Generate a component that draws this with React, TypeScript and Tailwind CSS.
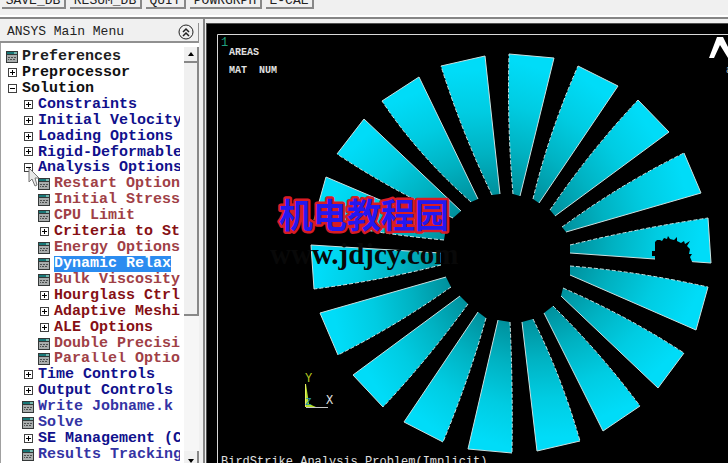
import React from 'react';

type Kind = 'plus' | 'minus' | 'leaf';
type Item = { label: string; level: 0 | 1 | 2; kind: Kind; selected?: boolean };

const items: Item[] = [
  { label: 'Preferences', level: 0, kind: 'leaf' },
  { label: 'Preprocessor', level: 0, kind: 'plus' },
  { label: 'Solution', level: 0, kind: 'minus' },
  { label: 'Constraints', level: 1, kind: 'plus' },
  { label: 'Initial Velocity', level: 1, kind: 'plus' },
  { label: 'Loading Options', level: 1, kind: 'plus' },
  { label: 'Rigid-Deformable', level: 1, kind: 'plus' },
  { label: 'Analysis Options', level: 1, kind: 'minus' },
  { label: 'Restart Option', level: 2, kind: 'leaf' },
  { label: 'Initial Stress', level: 2, kind: 'leaf' },
  { label: 'CPU Limit', level: 2, kind: 'leaf' },
  { label: 'Criteria to St', level: 2, kind: 'plus' },
  { label: 'Energy Options', level: 2, kind: 'leaf' },
  { label: 'Dynamic Relax', level: 2, kind: 'leaf', selected: true },
  { label: 'Bulk Viscosity', level: 2, kind: 'leaf' },
  { label: 'Hourglass Ctrl', level: 2, kind: 'plus' },
  { label: 'Adaptive Meshi', level: 2, kind: 'plus' },
  { label: 'ALE Options', level: 2, kind: 'plus' },
  { label: 'Double Precisi', level: 2, kind: 'leaf' },
  { label: 'Parallel Optio', level: 2, kind: 'leaf' },
  { label: 'Time Controls', level: 1, kind: 'plus' },
  { label: 'Output Controls', level: 1, kind: 'plus' },
  { label: 'Write Jobname.k', level: 1, kind: 'leaf' },
  { label: 'Solve', level: 1, kind: 'leaf' },
  { label: 'SE Management (C', level: 1, kind: 'plus' },
  { label: 'Results Tracking', level: 1, kind: 'leaf' },
];

const indent = ['pl-[3px]', 'pl-[19px]', 'pl-[35px]'];
const branchColor = ['text-[#101010]', 'text-[#10108c]', 'text-[#861014]'];
const leafColor = ['text-[#202020]', 'text-[#3434a4]', 'text-[#a04046]'];

type Pt = [number, number];
// outer start, outer end, inner end, inner start, midpoint of the start edge
const blades: [Pt, Pt, Pt, Pt, Pt][] = [
  [[509, 54], [554, 58], [520, 196], [513, 194], [509, 125]],
  [[578, 66], [618, 86], [539, 203], [533, 199], [552, 133]],
  [[638, 100], [669, 132], [555, 216], [550, 210], [592, 153]],
  [[684, 153], [701, 193], [566, 232], [562, 227], [622, 187]],
  [[708, 218], [711, 263], [570, 253], [570, 245], [638, 230]],
  [[708, 287], [696, 330], [570, 275], [570, 266], [639, 274]],
  [[684, 353], [658, 388], [561, 296], [563, 288], [625, 318]],
  [[640, 406], [603, 431], [544, 313], [553, 306], [599, 355]],
  [[580, 441], [537, 451], [522, 322], [533, 319], [559, 378]],
  [[512, 453], [468, 449], [498, 320], [510, 322], [512, 386]],
  [[443, 442], [404, 422], [478, 312], [486, 318], [467, 379]],
  [[383, 407], [353, 375], [460, 296], [468, 304], [427, 357]],
  [[338, 355], [320, 313], [446, 277], [451, 287], [396, 323]],
  [[314, 289], [311, 245], [441, 253], [441, 265], [378, 279]],
  [[314, 220], [326, 177], [446, 228], [444, 240], [378, 232]],
  [[337, 154], [364, 119], [461, 211], [453, 218], [393, 188]],
  [[382, 101], [419, 77], [478, 199], [471, 202], [422, 153]],
  [[441, 66], [485, 56], [500, 194], [492, 195], [464, 131]],
];

function Glyph({ kind }: { kind: Kind }) {
  if (kind === 'leaf') {
    return (
      <svg className="h-3 w-4 shrink-0" viewBox="0 0 16 12" shapeRendering="crispEdges" aria-hidden="true">
        <rect x="2" y="0" width="12" height="12" fill="#343838" />
        <rect x="3" y="1" width="7" height="2" fill="#187878" />
        <rect x="10" y="1" width="3" height="2" fill="#78b8b0" />
        <rect x="3" y="4" width="10" height="7" fill="#a8acac" />
        <path d="M4 6.5h2M7 6.5h2M10 6.5h2M4 8.5h1M6 8.5h2M9 8.5h2" stroke="#4c5050" />
      </svg>
    );
  }
  return (
    <svg className="h-3 w-4 shrink-0" viewBox="0 0 16 12" shapeRendering="crispEdges" aria-hidden="true">
      <rect x="4.5" y="1.5" width="8" height="8" fill="#fff" stroke="#404040" />
      <path d="M6 5.5h5" stroke="#000" />
      {kind === 'plus' && <path d="M8.5 3v5" stroke="#000" />}
    </svg>
  );
}

function TreeRow({ item }: { item: Item }) {
  const color = item.kind === 'leaf' ? leafColor[item.level] : branchColor[item.level];
  return (
    <li className="min-h-0 flex-1">
      <button
        type="button"
        className={`flex h-full w-full items-center gap-0.5 overflow-hidden text-left text-[15px] leading-4 font-bold whitespace-pre ${indent[item.level]} ${color}`}
      >
        <Glyph kind={item.kind} />
        <span className={item.selected ? 'bg-[#2b8cf0] text-white' : ''}>{item.label}</span>
      </button>
    </li>
  );
}

function ToolButton({ label, width }: { label: string; width: string }) {
  return (
    <button
      type="button"
      className={`h-5 shrink-0 border-r-2 border-b-2 border-[#888] bg-[#f0f0f0] pt-1 text-center text-[13px] leading-4 text-[#222] ${width}`}
    >
      {label}
    </button>
  );
}

function Blade({ points, id }: { points: [Pt, Pt, Pt, Pt, Pt]; id: string }) {
  const [o1, o2, i2, i1, m] = points;
  const cx = 2 * m[0] - (o1[0] + i1[0]) / 2;
  const cy = 2 * m[1] - (o1[1] + i1[1]) / 2;
  const edge = `M${i1} Q${cx},${cy} ${o1}`;
  return (
    <g>
      <linearGradient id={id} gradientUnits="userSpaceOnUse" x1={i1[0]} y1={i1[1]} x2={o2[0]} y2={o2[1]}>
        <stop offset="0" stopColor="#00909c" />
        <stop offset="0.3" stopColor="#00b2c2" />
        <stop offset="0.6" stopColor="#00cce2" />
        <stop offset="0.9" stopColor="#00dcf8" />
      </linearGradient>
      <path d={`${edge} L${o2} L${i2} Z`} fill={`url(#${id})`} />
      <path d={edge} fill="none" stroke="#c8e4e4" strokeDasharray="4 2" />
      <path d={`M${o1} L${o2} L${i2}`} fill="none" stroke="#c8e0e0" />
    </g>
  );
}

function Plot() {
  return (
    <svg
      className="block h-[439px] w-[521px] shrink-0 font-['Liberation_Mono',monospace]"
      viewBox="207 24 521 439"
      role="img"
      aria-label="Areas plot"
    >
      <path d="M217.5 463V34.5H728" fill="none" stroke="#d8d8d8" />
      <text x="221" y="46" fontSize="12" fill="#20a080">1</text>
      <g fontSize="10" fontWeight="bold" fill="#e0e0e0">
        <text x="229" y="55">AREAS</text>
        <text x="229" y="73">MAT</text>
        <text x="259" y="73">NUM</text>
      </g>
      {blades.map((b, i) => (
        <Blade key={i} points={b} id={`blade-${i}`} />
      ))}
      <path
        d="M655 264V256H652V251H655V242L657 240H660L662 241L664 238L667 239L668 236L670 239L674 240L677 237V241L681 243L684 241L685 244L690 241L687 246L690 249L689 254L692 254L690 257L693 264Z"
        fill="#000"
      />
      <path d="M709 58L717 37H723L728 47V58L720 45L714 58Z" fill="#fff" />
      <text x="726" y="73" fontSize="10" fill="#ccc">a</text>
      <path d="M306 384L309 404L316 407H306Z" fill="#b4e028" />
      <path d="M305.5 384V407" stroke="#e8f060" />
      <path d="M306 407.5H328" stroke="#c8c8c8" />
      <text x="305" y="382" fontSize="12" fill="#b4c820">Y</text>
      <text x="305" y="405" fontSize="11" fill="#2090b0">Z</text>
      <text x="326" y="404" fontSize="12" fill="#e0e0e0">X</text>
      <text x="221" y="465" fontSize="12" fill="#e0e0e0">BirdStrike Analysis Problem(Implicit)</text>
      <text x="270" y="264" fontSize="29" fontWeight="bold" fill="#080808" className="font-['Liberation_Serif',serif]">
        www.jdjcy.com
      </text>
      <text
        x="279"
        y="228"
        fontSize="34"
        fontWeight="bold"
        fill="#2418f0"
        stroke="#d81c24"
        strokeWidth="5"
        strokeLinejoin="round"
        paintOrder="stroke"
        className="font-['Noto_Sans_CJK_SC',sans-serif]"
      >
        机电教程园
      </text>
    </svg>
  );
}

export default function App() {
  return (
    <div className="flex h-screen flex-col overflow-hidden bg-[#f0f0f0] font-['Liberation_Mono',monospace]">
      <header className="flex h-[19px] shrink-0 items-end overflow-hidden border-b-2 border-[#858585]">
        <div className="flex h-full w-full items-end gap-1 border-b-2 border-white pb-1.5 pl-0.5">
          <ToolButton label="SAVE_DB" width="w-16" />
          <ToolButton label="RESUM_DB" width="w-18" />
          <ToolButton label="QUIT" width="w-10" />
          <ToolButton label="POWRGRPH" width="w-18" />
          <ToolButton label="E-CAE" width="w-12" />
        </div>
      </header>
      <main className="flex min-h-0 flex-1">
        <aside className="relative flex w-[203px] shrink-0 flex-col pt-1 pr-1">
          <div className="flex h-5 shrink-0 items-center justify-between border-r border-b-2 border-[#909090] bg-[#f0f0f0] pr-1 pl-[7px]">
            <h1 className="text-[13px] leading-4 text-[#222]">ANSYS Main Menu</h1>
            <button type="button" aria-label="Collapse menu">
              <svg className="h-4 w-4" viewBox="0 0 16 16" fill="none" stroke="#222">
                <circle cx="8" cy="8" r="7" />
                <path d="M5 8l3-3 3 3M5 12l3-3 3 3" strokeWidth="1.5" />
              </svg>
            </button>
          </div>
          <div className="flex min-h-0 flex-1 border-l border-[#a0a0a0] bg-white pt-1">
            <ul className="flex min-w-0 flex-1 flex-col overflow-hidden pt-0.5">
              {items.map((item) => (
                <TreeRow key={item.label} item={item} />
              ))}
            </ul>
            <div className="ml-1 flex w-[15px] shrink-0 flex-col bg-[#f6f6f6]">
              <button
                type="button"
                aria-label="Scroll up"
                className="flex h-4 items-center justify-center border-r-2 border-b-2 border-[#888] bg-[#f0f0f0]"
              >
                <svg className="h-1 w-2" viewBox="0 0 8 4" aria-hidden="true">
                  <path d="M1 4l3-4 3 4z" />
                </svg>
              </button>
              <div className="h-[253px] border-r-2 border-b-2 border-[#888] bg-[#f0f0f0]" />
              <div className="flex-1" />
              <button
                type="button"
                aria-label="Scroll down"
                className="flex h-3 items-end justify-center border-r-2 border-[#888] bg-[#f0f0f0]"
              >
                <svg className="h-1 w-2" viewBox="0 0 8 4" aria-hidden="true">
                  <path d="M1 0l3 4 3-4z" />
                </svg>
              </button>
            </div>
          </div>
          <svg className="absolute top-[148px] left-7 h-5 w-3" viewBox="0 0 12 20" aria-hidden="true">
            <path d="M1 1V15L4 12L7 19L9 18L7 11H11Z" fill="#e8e8e8" stroke="#777" />
          </svg>
        </aside>
        <section className="flex min-w-0 flex-1 border-l-2 border-[#858585] pt-1 pl-px">
          <div className="min-w-0 flex-1 overflow-hidden border-t border-l border-[#505050] bg-black">
            <Plot />
          </div>
        </section>
      </main>
    </div>
  );
}
